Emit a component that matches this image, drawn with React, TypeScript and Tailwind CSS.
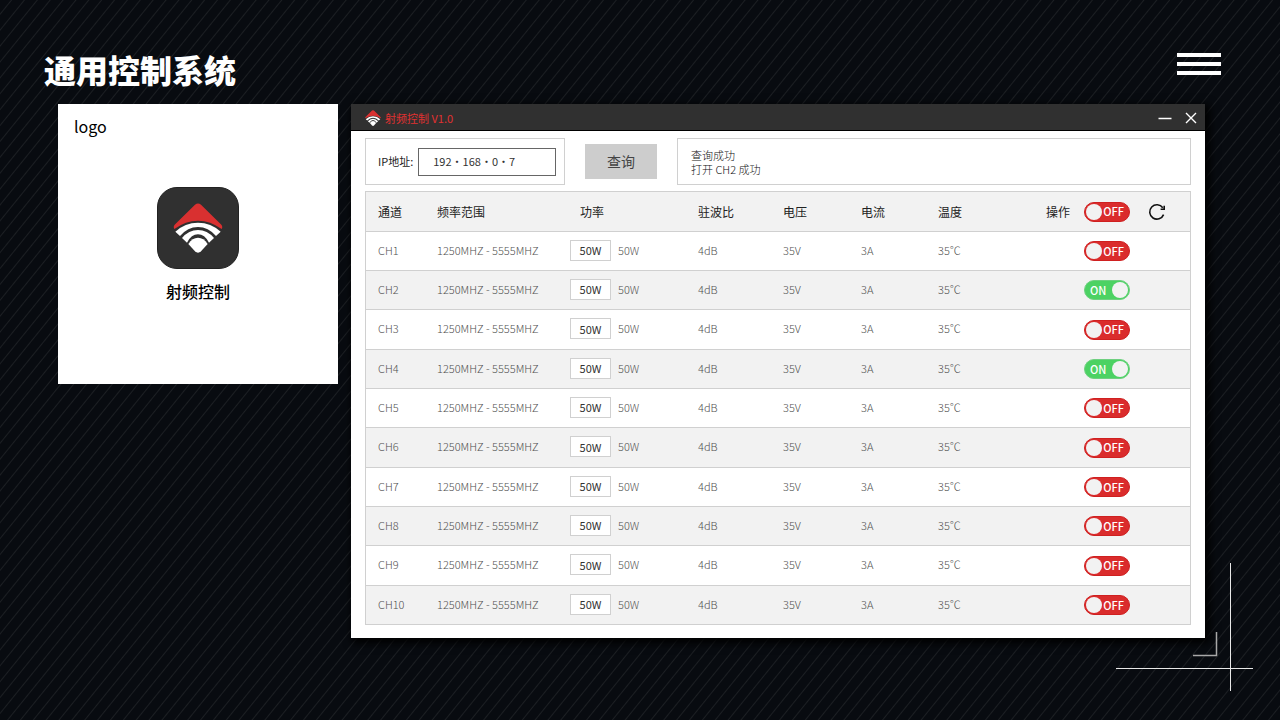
import { useState } from "react";

interface Channel {
  name: string;
  range: string;
  power: string;
  swr: string;
  voltage: string;
  current: string;
  temperature: string;
}

const CHANNELS: Channel[] = Array.from({ length: 10 }, (_, index) => ({
  name: `CH${index + 1}`,
  range: "1250MHZ - 5555MHZ",
  power: "50W",
  swr: "4dB",
  voltage: "35V",
  current: "3A",
  temperature: "35℃",
}));

const LOG = ["查询成功", "打开 CH2 成功"];

const HEAD_CELL =
  "border-b border-[#d0d0d0] pl-[13px] text-left font-normal first:pl-3";
const BODY_CELL =
  "border-b border-[#d0d0d0] pb-0.5 pl-[13px] first:pl-3 group-last:border-b-0";

function Mark({ className }: { className: string }) {
  return (
    <svg viewBox="0 0 150 150" className={className} aria-hidden="true">
      <path
        d="M66 5Q75 -2 84 5L145 65Q150 71 146 78Q112 53 75 53T4 78Q0 71 5 65Z"
        fill="#d93030"
      />
      <g fill="#fff">
        <path d="M7 86Q36 59 75 59T143 86L129 99Q106 72 75 72T21 99Z" />
        <path d="M27 105Q47 81 75 81T123 105L108 119Q95 94 75 94T42 119Z" />
        <path d="M46 123Q58 104 75 104T104 123L84 145Q75 153 66 145Z" />
      </g>
    </svg>
  );
}

function RefreshIcon() {
  return (
    <svg
      viewBox="0 0 18 18"
      className="size-[18px]"
      fill="none"
      stroke="#111"
      strokeWidth="1.6"
      aria-hidden="true"
    >
      <path d="M15.6 11.6A7.2 7.2 0 1 1 14.8 4.8" />
      <path d="M16.2 2.8V6.2H12.6" />
    </svg>
  );
}

interface ToggleProps {
  label: string;
  checked: boolean;
  onChange: (checked: boolean) => void;
}

function Toggle({ label, checked, onChange }: ToggleProps) {
  return (
    <label
      className={[
        "flex h-5 w-[46px] cursor-pointer items-center justify-between rounded-full border px-px text-[11px] font-medium text-white",
        checked
          ? "flex-row-reverse border-[#6fd080] bg-[#4cd263]"
          : "border-[#cf2020] bg-[#da2c2c]",
      ].join(" ")}
    >
      <input
        type="checkbox"
        role="switch"
        aria-label={label}
        checked={checked}
        onChange={(event) => onChange(event.target.checked)}
        className="sr-only"
      />
      <span className="size-4 rounded-full bg-[#f2f2f2]" />
      <span className={checked ? "pl-1" : "pr-1"}>{checked ? "ON" : "OFF"}</span>
    </label>
  );
}

function LogoCard() {
  return (
    <section className="flex h-[280px] w-[280px] shrink-0 flex-col bg-white px-4 pt-2.5">
      <h2 className="text-base leading-6 text-black">logo</h2>
      <div className="mt-[49px] flex flex-col items-center">
        <div className="flex size-[82px] items-center justify-center rounded-[20px] border border-[#222] bg-[#303030]">
          <Mark className="size-[50px]" />
        </div>
        <p className="mt-2.5 text-base leading-6 font-medium text-black">
          射频控制
        </p>
      </div>
    </section>
  );
}

function TitleBar() {
  return (
    <div className="flex h-[27px] items-center border-b border-black bg-[#303030] pt-0.5 pr-[5px] pl-3.5">
      <Mark className="size-4" />
      <h2 className="ml-1 text-[11px] text-[#e03030]">射频控制 V1.0</h2>
      <button
        type="button"
        aria-label="最小化"
        className="ml-auto flex size-[18px] items-center justify-center"
      >
        <svg viewBox="0 0 14 14" className="size-3.5" stroke="#fff" strokeWidth="1.5">
          <path d="M0.5 7.5H13.5" />
        </svg>
      </button>
      <button
        type="button"
        aria-label="关闭"
        className="ml-2 flex size-[18px] items-center justify-center"
      >
        <svg viewBox="0 0 12 12" className="size-3" stroke="#fff" strokeWidth="1.4">
          <path d="M1 1L11 11M11 1L1 11" />
        </svg>
      </button>
    </div>
  );
}

function QueryBar() {
  return (
    <div className="flex items-stretch gap-5">
      <div className="flex h-[47px] w-[200px] items-center gap-[5px] border border-[#d0d0d0] pl-3">
        <label htmlFor="ip" className="text-[11px] text-[#222]">
          IP地址:
        </label>
        <input
          id="ip"
          defaultValue="192・168・0・7"
          className="h-7 w-[138px] border border-[#666] px-3.5 pb-0.5 text-[11px] text-[#333]"
        />
      </div>
      <button
        type="button"
        className="h-[35px] w-[72px] self-center bg-[#cdcdcd] pb-0.5 text-sm text-[#444]"
      >
        查询
      </button>
      <div className="flex flex-1 flex-col justify-center border border-[#d0d0d0] pl-[13px] text-[11px] leading-[14px] font-light text-[#111]">
        {LOG.map((line) => (
          <p key={line}>{line}</p>
        ))}
      </div>
    </div>
  );
}

function ChannelTable() {
  const [enabled, setEnabled] = useState<string[]>(["CH2", "CH4"]);

  const toggle = (name: string, on: boolean) =>
    setEnabled((names) =>
      on ? [...names, name] : names.filter((item) => item !== name)
    );

  return (
    <div className="mt-1.5 border border-[#d0d0d0]">
      <table className="w-full table-fixed border-separate border-spacing-0 text-[11px] text-[#505050]">
        <colgroup>
          <col className="w-[58px]" />
          <col className="w-[133px]" />
          <col className="w-[128px]" />
          <col className="w-[85px]" />
          <col className="w-[78px]" />
          <col className="w-[77px]" />
          <col className="w-[108px]" />
          <col className="w-[157px]" />
        </colgroup>
        <thead>
          <tr className="h-10 bg-[#f2f2f2] text-xs text-[#222]">
            <th className={HEAD_CELL}>通道</th>
            <th className={HEAD_CELL}>频率范围</th>
            <th className="border-b border-[#d0d0d0] pl-[23px] text-left font-normal">
              功率
            </th>
            <th className={HEAD_CELL}>驻波比</th>
            <th className={HEAD_CELL}>电压</th>
            <th className={HEAD_CELL}>电流</th>
            <th className={HEAD_CELL}>温度</th>
            <th className={HEAD_CELL}>
              <div className="flex items-center">
                <span className="w-[38px]">操作</span>
                <Toggle
                  label="全部通道"
                  checked={enabled.length === CHANNELS.length}
                  onChange={(on) =>
                    setEnabled(on ? CHANNELS.map((item) => item.name) : [])
                  }
                />
                <button type="button" aria-label="刷新" className="ml-[18px]">
                  <RefreshIcon />
                </button>
              </div>
            </th>
          </tr>
        </thead>
        <tbody className="font-light">
          {CHANNELS.map((channel) => (
            <tr
              key={channel.name}
              className="group h-[39px] last:h-[38px] even:bg-[#f2f2f2] nth-[3n]:h-10"
            >
              <td className={BODY_CELL}>{channel.name}</td>
              <td className={BODY_CELL}>{channel.range}</td>
              <td className={BODY_CELL}>
                <div className="flex items-center gap-[7px]">
                  <input
                    aria-label={`${channel.name} 功率`}
                    defaultValue={channel.power}
                    className="h-[21px] w-[41px] border border-[#d0d0d0] bg-white text-center font-normal text-[#333]"
                  />
                  <span>{channel.power}</span>
                </div>
              </td>
              <td className={BODY_CELL}>{channel.swr}</td>
              <td className={BODY_CELL}>{channel.voltage}</td>
              <td className={BODY_CELL}>{channel.current}</td>
              <td className={BODY_CELL}>{channel.temperature}</td>
              <td className="border-b border-[#d0d0d0] pl-[51px] group-last:border-b-0">
                <Toggle
                  label={channel.name}
                  checked={enabled.includes(channel.name)}
                  onChange={(on) => toggle(channel.name, on)}
                />
              </td>
            </tr>
          ))}
        </tbody>
      </table>
    </div>
  );
}

export default function App() {
  return (
    <div className="relative min-h-screen bg-[#080b10] bg-[repeating-linear-gradient(129deg,#080b10_0px,#080b10_8px,#1c1f23_9px,#080b10_10px)] font-['Noto_Sans_CJK_SC','Noto_Sans',sans-serif]">
      <header className="flex h-[104px] items-start justify-between pt-[49px] pr-[59px] pl-11">
        <h1 className="text-[32px] leading-10 font-black text-white">
          通用控制系统
        </h1>
        <button
          type="button"
          aria-label="菜单"
          className="mt-1 flex w-11 flex-col gap-[5px]"
        >
          <span className="h-1 w-full bg-white" />
          <span className="h-1 w-full bg-white" />
          <span className="h-1 w-full bg-white" />
        </button>
      </header>

      <main className="flex items-start gap-[13px] pr-[75px] pb-20 pl-[58px]">
        <LogoCard />
        <section className="min-w-0 flex-1 bg-white shadow-[3px_3px_8px_2px_#000]">
          <TitleBar />
          <div className="px-3.5 pt-[7px] pb-[13px]">
            <QueryBar />
            <ChannelTable />
          </div>
        </section>
      </main>

      <svg
        viewBox="0 0 138 129"
        className="pointer-events-none absolute right-[26px] bottom-7 h-[129px] w-[138px]"
        fill="none"
        aria-hidden="true"
      >
        <path d="M114.5 0V128M0 105.5H137" stroke="#e8e8e8" />
        <path d="M77 92.5H100.5V69" stroke="#a8a8a8" strokeWidth="1.5" />
      </svg>
    </div>
  );
}
